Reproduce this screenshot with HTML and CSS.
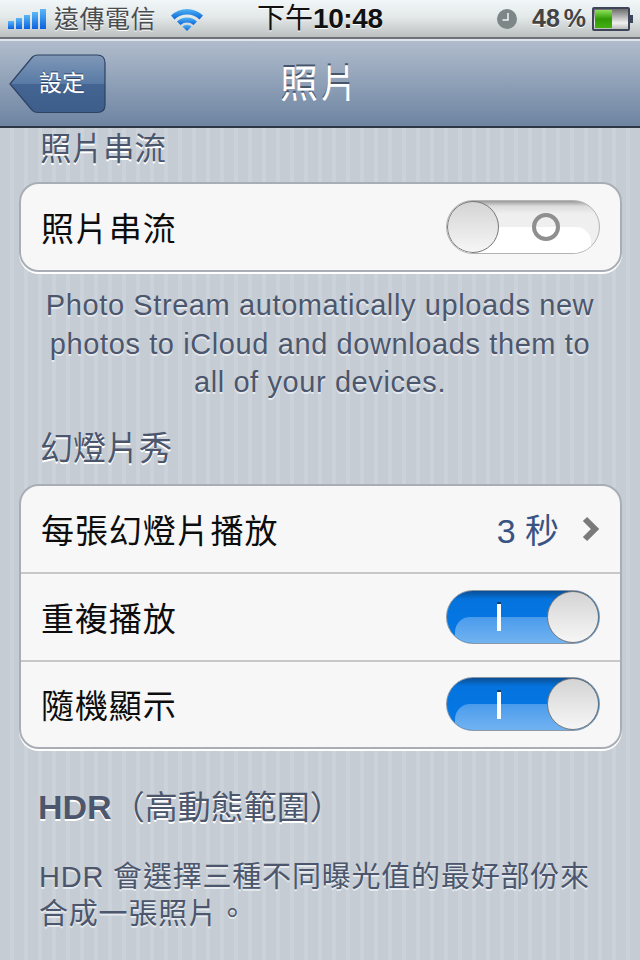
FILE: index.html
```html
<!DOCTYPE html>
<html lang="zh-Hant">
<head>
    <meta charset="UTF-8">
    <meta name="viewport" content="width=device-width, initial-scale=1.0">
    <title>照片</title>
    <link rel="stylesheet" href="styles.css">
</head>
<body>
    <div class="status-bar">
        <div class="status-left">
            <div class="signal">
                <span class="bar bar-1"></span>
                <span class="bar bar-2"></span>
                <span class="bar bar-3"></span>
                <span class="bar bar-4"></span>
                <span class="bar bar-5"></span>
            </div>
            <span class="carrier">遠傳電信</span>
            <svg class="wifi" width="34" height="24" viewBox="0 0 34 24">
                <defs>
                    <linearGradient id="wifiBlue" x1="0" y1="0" x2="0" y2="1">
                        <stop offset="0" stop-color="#4fb4f4"/>
                        <stop offset="1" stop-color="#0a63d8"/>
                    </linearGradient>
                </defs>
                <path d="M1 8.5 A23 23 0 0 1 33 8.5 L29.5 12.5 A18 18 0 0 0 4.500 12.500 Z" fill="url(#wifiBlue)"/>
                <path d="M7 14.500 A14.500 14.500 0 0 1 27 14.500 L23.500 18 A10 10 0 0 0 10.500 18 Z" fill="url(#wifiBlue)"/>
                <path d="M17 24 L12.500 19.500 A6.500 6.500 0 0 1 21.500 19.500 Z" fill="url(#wifiBlue)"/>
            </svg>
        </div>
        <div class="clock-text">下午<b>10:48</b></div>
        <div class="status-right">
            <svg class="alarm" width="20" height="20" viewBox="0 0 20 20">
                <circle cx="10" cy="10" r="10" fill="#7d8787"/>
                <path d="M11 4 V11 H5.500" fill="none" stroke="#f4f6f6" stroke-width="1.500"/>
            </svg>
            <span class="percent">48 %</span>
            <div class="battery">
                <div class="battery-body">
                    <div class="battery-fill"></div>
                </div>
                <div class="battery-tip"></div>
            </div>
        </div>
    </div>

    <div class="nav-bar">
        <div class="back-button">
            <svg class="back-shape" width="98" height="60" viewBox="0 0 98 60">
                <defs>
                    <linearGradient id="backBlue" x1="0" y1="0" x2="0" y2="1">
                        <stop offset="0" stop-color="#8098b8"/>
                        <stop offset="0.5" stop-color="#587aa5"/>
                        <stop offset="0.5" stop-color="#446591"/>
                        <stop offset="1" stop-color="#3d5d8b"/>
                    </linearGradient>
                </defs>
                <path d="M1 30 L23 3.500 Q25 1 29 1 H88 Q96 1 96 9 V51 Q96 58.500 88 58.500 H29 Q25 58.500 23 56 Z" fill="url(#backBlue)" stroke="#2e4263" stroke-width="1.200"/>
            </svg>
            <span class="back-label">設定</span>
        </div>
        <div class="nav-title">照片</div>
    </div>

    <div class="content">
        <div class="section-head first-head">照片串流</div>
        <div class="group">
            <div class="row">
                <span class="row-label">照片串流</span>
                <div class="switch switch-off">
                    <div class="knob"></div>
                    <div class="off-mark"></div>
                </div>
            </div>
        </div>
        <p class="note">Photo Stream automatically uploads new<br>photos to iCloud and downloads them to<br>all of your devices.</p>

        <div class="section-head">幻燈片秀</div>
        <div class="group">
            <div class="row">
                <span class="row-label">每張幻燈片播放</span>
                <div class="row-value">
                    <span class="value-text">3 秒</span>
                    <svg class="chevron" width="18" height="26" viewBox="0 0 18 26">
                        <path d="M3 3 L13 13 L3 23" fill="none" stroke="#7a7a7a" stroke-width="6"/>
                    </svg>
                </div>
            </div>
            <div class="row">
                <span class="row-label">重複播放</span>
                <div class="switch switch-on">
                    <div class="on-mark"></div>
                    <div class="knob"></div>
                </div>
            </div>
            <div class="row">
                <span class="row-label">隨機顯示</span>
                <div class="switch switch-on">
                    <div class="on-mark"></div>
                    <div class="knob"></div>
                </div>
            </div>
        </div>

        <div class="section-head hdr-head"><b>HDR</b>（高動態範圍）</div>
        <p class="hdr-note">HDR 會選擇三種不同曝光值的最好部份來<br>合成一張照片。</p>
    </div>
</body>
</html>
```
FILE: styles.css
```css
html, body {
    margin: 0;
    padding: 0;
}

body {
    width: 640px;
    height: 960px;
    overflow: hidden;
    font-family: "Liberation Sans", "Noto Sans CJK TC", sans-serif;
    background-color: #c5ccd4;
}

/* status bar */
.status-bar {
    height: 39px;
    box-sizing: border-box;
    border-bottom: 2px solid #6e7276;
    background: linear-gradient(#f1f6f8, #e4e9ea 45%, #bcc0c0);
    display: flex;
    align-items: center;
    justify-content: space-between;
    position: relative;
}

.status-left {
    display: flex;
    align-items: center;
    padding-left: 8px;
}

.signal {
    display: flex;
    align-items: flex-end;
    gap: 2px;
    height: 21px;
}

.bar {
    width: 6px;
    background: linear-gradient(#5ab8f6, #0a62e0);
}

.bar-1 { height: 8px; }
.bar-2 { height: 11px; }
.bar-3 { height: 14px; }
.bar-4 { height: 17px; }
.bar-5 { height: 20px; }

.carrier {
    margin-left: 8px;
    font-size: 25px;
    letter-spacing: 0.5px;
    line-height: 38px;
    color: #4a4d50;
    text-shadow: 0 1px 0 #fff;
}

.wifi {
    margin-left: 14px;
}

.clock-text {
    position: absolute;
    left: 257px;
    top: 0;
    font-size: 28px;
    line-height: 38px;
    color: #111;
    text-shadow: 0 1px 0 #fff;
    white-space: nowrap;
}

.clock-text b {
    letter-spacing: -0.4px;
}

.status-right {
    display: flex;
    align-items: center;
    padding-right: 7px;
}

.percent {
    margin-left: 15px;
    font-size: 25px;
    font-weight: bold;
    word-spacing: -3px;
    color: #444;
    text-shadow: 0 1px 0 #fff;
}

.battery {
    margin-left: 6px;
    display: flex;
    align-items: center;
}

.battery-body {
    width: 32px;
    height: 18px;
    border: 2px solid #3c4658;
    border-radius: 2px;
    background: linear-gradient(#6e6e6e, #f0f0f0 70%, #bbb);
    padding: 1px;
}

.battery-fill {
    width: 17px;
    height: 18px;
    background: linear-gradient(#8fe05a, #2f9a06 50%, #43b00f);
}

.battery-tip {
    width: 3px;
    height: 8px;
    background: #3c4658;
}

/* nav bar */
.nav-bar {
    height: 89px;
    box-sizing: border-box;
    border-top: 2px solid #dfe5ec;
    border-bottom: 2px solid #2d3642;
    padding-bottom: 6px;
    background: linear-gradient(#b0bccc, #6d84a2);
    display: flex;
    align-items: center;
    justify-content: center;
    position: relative;
}

.back-button {
    position: absolute;
    left: 9px;
    top: 13px;
    width: 98px;
    height: 60px;
    display: flex;
    align-items: center;
}

.back-shape {
    position: absolute;
    left: 0;
    top: 0;
}

.back-label {
    position: relative;
    margin: 0 0 7px 30px;
    font-size: 23px;
    color: #fff;
    text-shadow: 0 -1px 0 #2e4263;
}

.nav-title {
    font-size: 38px;
    letter-spacing: 2px;
    color: #fff;
    text-shadow: 0 -2px 0 #48566c;
}

/* page content */
.content {
    height: 832px;
    box-sizing: border-box;
    padding: 0 19px;
    background-color: #c5ccd4;
    background-image: repeating-linear-gradient(90deg, #c5ccd4 0, #c5ccd4 10px, #cbd2d9 10px, #cbd2d9 14px);
    overflow: hidden;
}

.section-head {
    margin: 27px 0 15px 21px;
    font-size: 33px;
    line-height: 40px;
    color: #4c566c;
    text-shadow: 0 2px 0 #fff;
}

.first-head {
    margin: 1px 0 0 21px;
    font-size: 31.500px;
}

.hdr-head {
    margin: 38px 0 0 19px;
    white-space: nowrap;
}

.hdr-head b {
    font-size: 34px;
}

.group {
    margin-top: 13px;
    box-sizing: border-box;
    width: 603px;
    background: #f7f7f7;
    border: 2px solid #a9aeb6;
    border-radius: 20px;
    box-shadow: 0 2px 0 #fff;
}

.row {
    height: 86px;
    display: flex;
    align-items: center;
    justify-content: space-between;
    padding: 0 20px 0 20px;
    border-bottom: 2px solid #c8c8c8;
}

.row:last-child {
    height: 85px;
    border-bottom: none;
}

.row:only-child {
    height: 86px;
}

.row-label {
    font-size: 33px;
    letter-spacing: 0.9px;
    color: #0d0d0d;
}

.row-value {
    display: flex;
    align-items: center;
    gap: 23px;
}

.value-text {
    font-size: 34px;
    color: #395383;
}

.note {
    margin: 14px 0 0;
    font-size: 29px;
    letter-spacing: 0.6px;
    line-height: 38.500px;
    text-align: center;
    color: #4c566c;
    text-shadow: 0 2px 0 #e6eaee;
    white-space: nowrap;
}

.hdr-note {
    margin: 31px 0 0 20px;
    font-size: 29px;
    letter-spacing: 0.8px;
    line-height: 37.500px;
    color: #4c566c;
    text-shadow: 0 2px 0 #e6eaee;
    white-space: nowrap;
}

/* toggle switches */
.switch {
    width: 154px;
    height: 54px;
    box-sizing: border-box;
    border-radius: 27px;
    display: flex;
    align-items: center;
    position: relative;
    overflow: hidden;
}

/* lower gloss inside the track */
.switch::before {
    content: "";
    position: absolute;
    left: 8px;
    right: 8px;
    top: 50%;
    bottom: 0;
    border-radius: 15px 15px 0 0;
}

.switch-off {
    border: 1px solid #b4b4b4;
    background: linear-gradient(#9a9a9a 0, #dcdcdc 10%, #efefef 25%, #f0f0f0 100%);
}

.switch-off::before {
    background: #fff;
}

.switch-on {
    border: 1px solid #8a97a6;
    background: linear-gradient(#0b4f94 0, #0473de 16%, #0579e6 100%);
    justify-content: flex-end;
}

.switch-on::before {
    background: linear-gradient(#4a9bec, #72b3f1);
}

.knob {
    position: relative;
    width: 52px;
    height: 52px;
    flex: none;
    box-sizing: border-box;
    border: 1.500px solid #777;
    border-radius: 50%;
    background: linear-gradient(#d4d4d4, #f6f6f6);
}

.off-mark {
    position: relative;
    width: 28px;
    height: 28px;
    box-sizing: border-box;
    margin-left: 33px;
    border: 4px solid #8f8f8f;
    border-radius: 50%;
}

.on-mark {
    position: relative;
    width: 4px;
    height: 29px;
    margin-right: 46px;
    background: #fff;
    border-top: 2px solid #0c3f72;
    box-sizing: border-box;
}
```
